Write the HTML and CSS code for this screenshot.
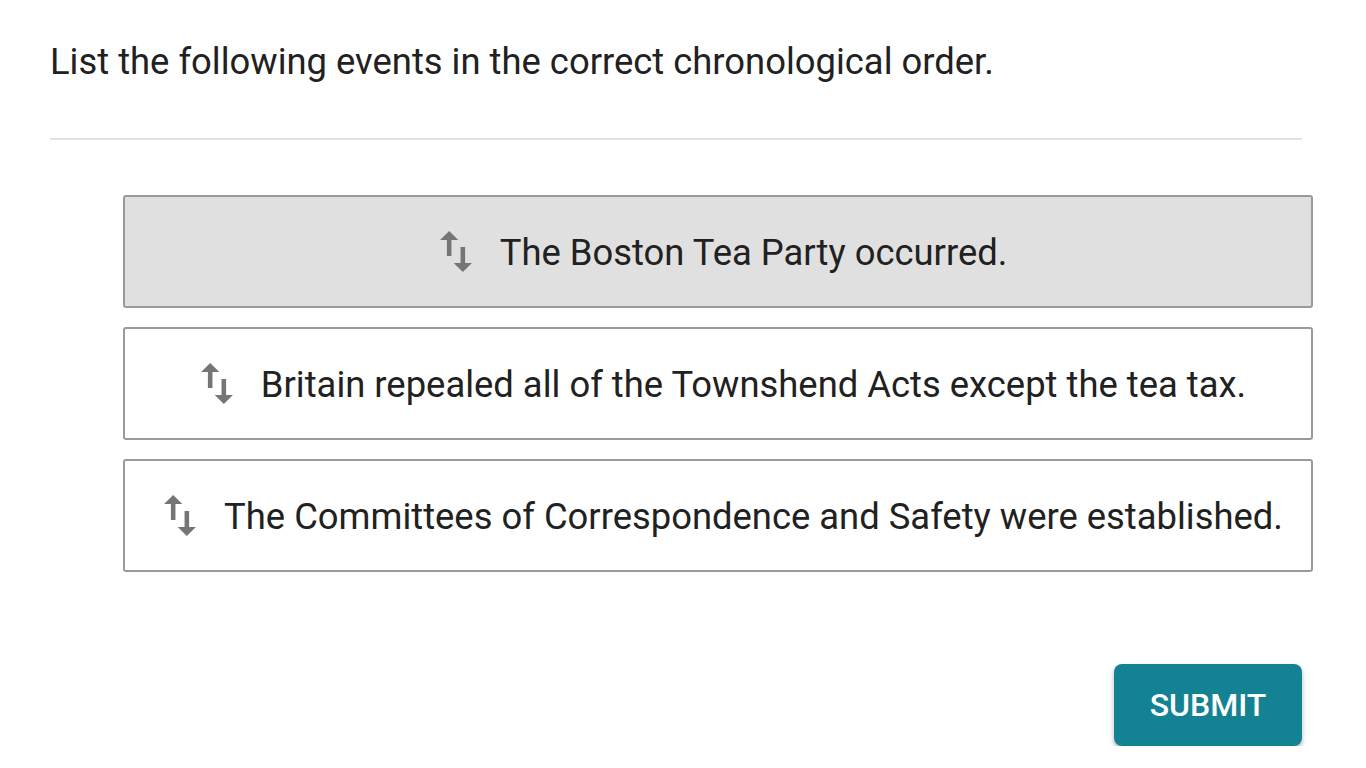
FILE: index.html
```html
<!DOCTYPE html>
<html>
<head>
<meta charset="utf-8">
<link rel="stylesheet" href="styles.css">
</head>
<body>
<main class="page">
  <h1 class="prompt">List the following events in the correct chronological order.</h1>
  <hr class="divider">
  <ol class="items">
    <li class="item item-active">
      <svg class="handle" viewBox="5 3 14 18" aria-hidden="true"><path d="M16 17.01V10h-2v7.01h-3L15 21l4-3.99h-3zM9 3L5 6.99h3V14h2V6.99h3L9 3z"/></svg>
      <span class="label">The Boston Tea Party occurred.</span>
    </li>
    <li class="item">
      <svg class="handle" viewBox="5 3 14 18" aria-hidden="true"><path d="M16 17.01V10h-2v7.01h-3L15 21l4-3.99h-3zM9 3L5 6.99h3V14h2V6.99h3L9 3z"/></svg>
      <span class="label">Britain repealed all of the Townshend Acts except the tea tax.</span>
    </li>
    <li class="item">
      <svg class="handle" viewBox="5 3 14 18" aria-hidden="true"><path d="M16 17.01V10h-2v7.01h-3L15 21l4-3.99h-3zM9 3L5 6.99h3V14h2V6.99h3L9 3z"/></svg>
      <span class="label">The Committees of Correspondence and Safety were established.</span>
    </li>
  </ol>
  <div class="actions">
    <button class="submit" type="button">SUBMIT</button>
  </div>
</main>
</body>
</html>
```
FILE: styles.css
```css
html, body {
  margin: 0;
  padding: 0;
  background: #ffffff;
}
body {
  font-family: Roboto, "Noto Sans", sans-serif;
  color: #212121;
}
.page {
  width: 1252px;
  padding: 0 0 0 50px;
}
.prompt {
  margin: 0;
  padding-top: 40px;
  font-size: 36.4px;
  font-weight: 400;
  line-height: 44px;
}
.divider {
  margin: 54px 0 0 0;
  border: 0;
  height: 2px;
  background: #e2e2e2;
}
.items {
  list-style: none;
  margin: 55px 0 0 73px;
  padding: 0;
  width: 1190px;
  display: flex;
  flex-direction: column;
  gap: 19px;
}
.item {
  box-sizing: border-box;
  height: 113px;
  padding-left: 11px;
  border: 2px solid #9a9a9a;
  border-radius: 3px;
  background: #ffffff;
  display: flex;
  align-items: center;
  justify-content: center;
  gap: 28px;
}
.item-active {
  background: #e0e0e0;
}
.handle {
  width: 32px;
  height: 41px;
  fill: #757575;
  flex: none;
}
.label {
  font-size: 36.4px;
  line-height: 42px;
  padding-top: 2px;
  color: #212121;
}
.actions {
  display: flex;
  justify-content: flex-end;
  margin-top: 92px;
}
.submit {
  width: 188px;
  height: 82px;
  border: 0;
  border-radius: 8px;
  background: #138393;
  color: #ffffff;
  font-family: Roboto, sans-serif;
  font-size: 32px;
  font-weight: 500;
  letter-spacing: 0;
  box-shadow: 0 3px 5px rgba(0,0,0,0.3);
}
```
